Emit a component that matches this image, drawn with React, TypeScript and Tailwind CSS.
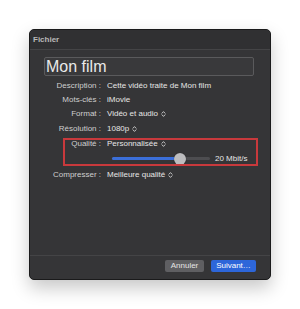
import type { ReactNode } from 'react';

function Chevrons() {
  return (
    <svg width="5" height="8" viewBox="0 0 5 8" className="ml-[3px] shrink-0">
      <path d="M1 3.2 L2.5 1.6 L4 3.2 M1 4.8 L2.5 6.4 L4 4.8" fill="none" stroke="#d8d8d8" strokeWidth="0.9" strokeLinecap="round" strokeLinejoin="round" />
    </svg>
  );
}

function Row({ label, children, className = '' }: { label: string; children: ReactNode; className?: string }) {
  return (
    <div className={`flex h-[14px] items-center ${className}`}>
      <span className="w-[57px] shrink-0 text-right text-[#cfcfcf]">{label}</span>
      <span className="ml-[6px] flex items-center text-[#e6e6e6]">{children}</span>
    </div>
  );
}

export default function App() {
  const value = 69; // % of slider

  return (
    <div className="flex h-[309px] w-[300px] justify-center bg-white pt-[29px] font-['Liberation_Sans',Arial,sans-serif] text-[8px]">
      <div className="flex h-[251px] w-[242px] flex-col rounded-[5px] border border-[#1a1a1b] bg-[#353537] shadow-[0_8px_18px_rgba(0,0,0,0.22)]">
        {/* title bar */}
        <div className="flex h-[20px] items-center rounded-t-[4px] border-b border-[#444446] bg-[#303032] px-[3px] font-bold text-[#b9b9b9]">
          Fichier
        </div>

        <div className="pl-[14px] pr-[16px] pt-[7px]">
          <div className="flex h-[19px] items-center rounded-[2px] border border-[#5a5a5c] bg-[#39393b] pl-[1px] text-[16px] leading-none text-[#e9e9e9]">
            Mon film
          </div>

          <div className="mt-[3px]">
            <Row label="Description :">Cette vidéo traite de Mon film</Row>
            <Row label="Mots-clés :">iMovie</Row>
            <Row label="Format :">
              Vidéo et audio
              <Chevrons />
            </Row>
            <Row label="Résolution :" className="mt-[1px]">
              1080p
              <Chevrons />
            </Row>

            <div className="relative mt-[1px]">
              <Row label="Qualité :">
                Personnalisée
                <Chevrons />
              </Row>
              <div className="flex h-[15px] items-center pl-[68px]">
                <div className="relative h-[3px] w-[98px] rounded-full bg-[#4d4d50]">
                  <div className="h-full rounded-full bg-[#3b6fd9]" style={{ width: `${value}%` }} />
                  <div
                    className="absolute top-1/2 h-[12px] w-[12px] -translate-x-1/2 -translate-y-1/2 rounded-full bg-[#bcbcbe] shadow-[0_0_1px_rgba(0,0,0,0.6)]"
                    style={{ left: `${value}%` }}
                  />
                </div>
                <span className="ml-[5px] text-[#e6e6e6]">20 Mbit/s</span>
              </div>
              {/* highlight annotation */}
              <div className="pointer-events-none absolute left-[19px] top-[1px] h-[28px] w-[195px] border-2 border-[#c8393c]" />
            </div>

            <Row label="Compresser :" className="mt-[2px]">
              Meilleure qualité
              <Chevrons />
            </Row>
          </div>
        </div>

        <div className="mt-auto flex justify-end gap-[7px] border-t border-[#444446] pb-[7px] pr-[14px] pt-[4px]">
          <button className="flex h-[12px] w-[39px] items-center justify-center rounded-[2px] bg-[#5f5f62] text-[#e4e4e4]">
            Annuler
          </button>
          <button className="flex h-[12px] w-[45px] items-center justify-center rounded-[2px] bg-[#2d66d9] text-white">
            Suivant…
          </button>
        </div>
      </div>
    </div>
  );
}
